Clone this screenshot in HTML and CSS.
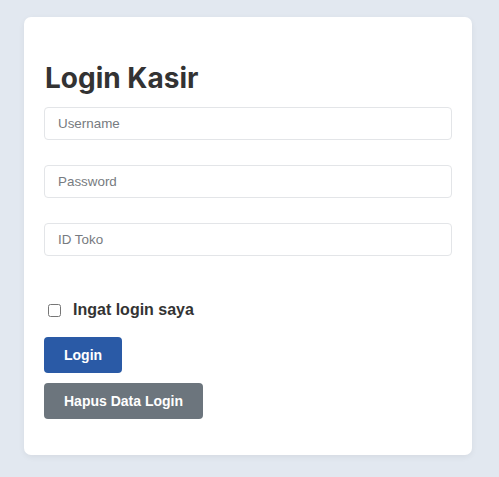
FILE: index.html
```html
<!DOCTYPE html>
<html lang="id">
<head>
<meta charset="utf-8">
<title>Login Kasir</title>
<link rel="stylesheet" href="styles.css">
</head>
<body>
<div class="card">
  <h1 class="title">Login Kasir</h1>
  <input class="field" type="text" placeholder="Username">
  <input class="field" type="password" placeholder="Password">
  <input class="field" type="text" placeholder="ID Toko">
  <label class="remember"><input type="checkbox" class="check"><span>Ingat login saya</span></label>
  <button class="btn btn-primary">Login</button>
  <button class="btn btn-secondary">Hapus Data Login</button>
</div>
</body>
</html>
```
FILE: styles.css
```css
html, body {
  margin: 0;
  padding: 0;
}
body {
  background: #e2e8f0;
  font-family: "Liberation Sans", Arial, sans-serif;
  padding: 17px 27px 22px 24px;
}
.card {
  background: #ffffff;
  border-radius: 7px;
  box-shadow: 0 2px 6px rgba(0, 0, 0, 0.06);
  padding: 20px 20px 36px 20px;
  display: flex;
  flex-direction: column;
  align-items: flex-start;
}
.title {
  font-family: Inter, "Liberation Sans", sans-serif;
  font-weight: 700;
  font-size: 28px;
  line-height: 34px;
  color: #333333;
  margin: 24px 0 12px 1px;
}
.field {
  box-sizing: border-box;
  width: 100%;
  height: 33px;
  border: 1px solid #e3e5e8;
  border-radius: 4px;
  padding: 0 13px;
  font-family: "Liberation Sans", Arial, sans-serif;
  font-size: 13.4px;
  color: #333;
  margin: 0 0 25px 0;
  outline: none;
}
.field::placeholder {
  color: #777b80;
}
.remember {
  display: flex;
  align-items: center;
  gap: 12px;
  margin: 20px 0 18px 4px;
  font-weight: 700;
  font-size: 16px;
  color: #333333;
}
.check {
  margin: 0;
  width: 13px;
  height: 13px;
}
.btn {
  border: none;
  border-radius: 4px;
  height: 36px;
  padding: 0 20px;
  font-family: "Liberation Sans", Arial, sans-serif;
  font-weight: 700;
  font-size: 14px;
  color: #ffffff;
}
.btn-primary {
  background: #2a5aa6;
  margin-bottom: 10px;
}
.btn-secondary {
  background: #6c757d;
}
```
